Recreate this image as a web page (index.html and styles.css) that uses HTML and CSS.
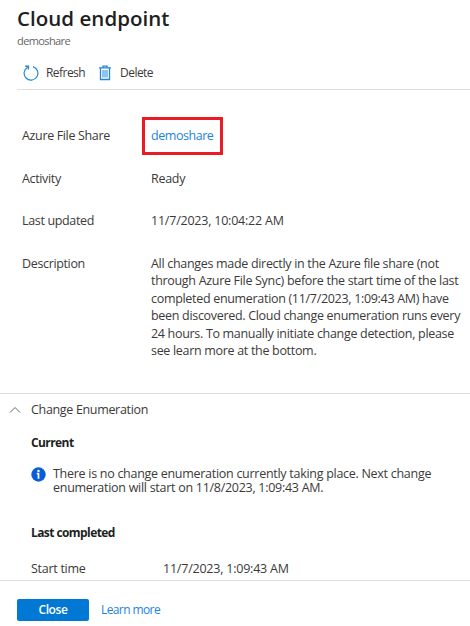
FILE: index.html
```
<!DOCTYPE html>
<html lang="en">
<head>
<meta charset="utf-8">
<title>Cloud endpoint</title>
<link rel="stylesheet" href="styles.css">
</head>
<body>
<main class="panel">
  <header class="header">
    <h1 class="title">Cloud endpoint</h1>
    <p class="subtitle">demoshare</p>
    <nav class="toolbar">
      <a class="command refresh"><svg class="icon" width="16" height="16" viewBox="0 0 16 16" fill="none" stroke="#2386d8" stroke-width="1.2"><path d="M4.6 2.2A6.9 6.9 0 1 0 10 1.6"/><path d="M2.2 1.3H5.4V4.4" stroke-width="1.4"/></svg><span>Refresh</span></a>
      <a class="command delete"><svg class="icon" width="12" height="16" viewBox="0 0 12 16" fill="none" stroke="#2386d8"><path d="M0 2.8H12M4 2.5V1.2H8V2.5" stroke-width="1.3"/><path d="M1.5 3V14.5H10.5V3" stroke-width="1.3"/><path d="M4 5V12.5M6 5V12.5M8 5V12.5"/></svg><span>Delete</span></a>
    </nav>
  </header>
  <dl class="details">
    <div class="row"><dt>Azure File Share</dt><dd><a class="share-link">demoshare</a></dd></div>
    <div class="row"><dt>Activity</dt><dd>Ready</dd></div>
    <div class="row"><dt>Last updated</dt><dd class="timestamp">11/7/2023, 10:04:22 AM</dd></div>
    <div class="row"><dt>Description</dt><dd class="description">All changes made directly in the Azure file share (not<br>through Azure File Sync) before the start time of the last<br>completed enumeration (11/7/2023, 1:09:43 AM) have<br>been discovered. Cloud change enumeration runs every<br>24 hours. To manually initiate change detection, please<br>see learn more at the bottom.</dd></div>
  </dl>
  <section class="enumeration">
    <div class="section-head"><svg class="chevron" width="12" height="8" viewBox="0 0 12 8" fill="none" stroke="#666"><path d="M1 6.5L6 1.5L11 6.5"/></svg><span>Change Enumeration</span></div>
    <h2 class="current">Current</h2>
    <div class="info"><svg class="info-icon" width="15" height="15" viewBox="0 0 15 15"><circle cx="7.5" cy="7.5" r="7.2" fill="#0b5cdb"/><circle cx="7.5" cy="3.9" r="1.2" fill="#fff"/><path d="M5.8 6.6H7.5V11.8" fill="none" stroke="#fff" stroke-width="1.7"/></svg><p>There is no change enumeration currently taking place. Next change<br>enumeration will start on 11/8/2023, 1:09:43 AM.</p></div>
    <h2 class="completed">Last completed</h2>
    <div class="start"><span>Start time</span><span class="timestamp">11/7/2023, 1:09:43 AM</span></div>
  </section>
  <footer class="footer"><button class="close">Close</button><a class="learn">Learn more</a></footer>
</main>
</body>
</html>
```
FILE: styles.css
```
* { box-sizing: border-box; margin: 0; padding: 0; }
body { background: #fff; color: #3b3a39; font: 12.5px/18px "Open Sans", "Noto Sans", sans-serif; letter-spacing: -0.28px; }
.panel { width: 470px; height: 626px; overflow: hidden; display: flex; flex-direction: column; white-space: nowrap; }
.header { height: 90px; margin-left: 17px; border-bottom: 1px solid #dedede; }
.title { padding-top: 4px; font-size: 20.5px; line-height: 28px; font-weight: 600; color: #201f1e; letter-spacing: 0.03px; }
.subtitle { margin-top: 1px; font-size: 11px; line-height: 16px; color: #666; letter-spacing: -0.6px; }
.toolbar { display: flex; margin-top: 15px; padding-left: 6px; gap: 14px; }
.command { display: flex; align-items: center; height: 18px; gap: 7px; font-size: 12px; letter-spacing: -0.55px; }
.icon { margin-top: -1px; }
.delete { gap: 9px; }
.details { height: 304px; padding: 37px 0 0 22px; border-bottom: 1px solid #dedede; }
.row { display: grid; grid-template-columns: 129px 1fr; height: 42.6px; line-height: 18px; }
dt { letter-spacing: -0.35px; }
.timestamp { letter-spacing: -0.22px; }
.description { line-height: 17.45px; letter-spacing: -0.31px; }
.share-link { display: inline-block; color: #1b84dc; margin: -10px -9px; padding: 7px 6px 7px; height: 38px; width: 81px; line-height: 18px; border: 3px solid #e91c23; letter-spacing: -0.45px; }
.enumeration { height: 187px; border-bottom: 1px solid #dedede; padding: 7px 0 0 31px; }
.section-head { display: flex; align-items: center; gap: 10px; margin-left: -22px; letter-spacing: -0.33px; }
h2 { font-size: 12px; line-height: 18px; font-weight: 700; color: #201f1e; letter-spacing: -0.58px; }
.current { margin-top: 15px; }
.info { display: flex; gap: 7px; margin-top: 15px; line-height: 13.7px; }
.info p { letter-spacing: -0.28px; }
.completed { margin-top: 30px; }
.start { display: grid; grid-template-columns: 132px 1fr; margin-top: 18px; }
.footer { display: flex; padding: 18px 0 0 17px; gap: 12px; line-height: 22px; }
.close { width: 72px; height: 22px; background: #0078d4; color: #fff; border: 0; border-radius: 2px; font: 600 12px/22px "Open Sans", sans-serif; letter-spacing: -0.4px; }
.learn { color: #1b84dc; font-size: 12px; line-height: 22px; letter-spacing: -0.6px; }
```
